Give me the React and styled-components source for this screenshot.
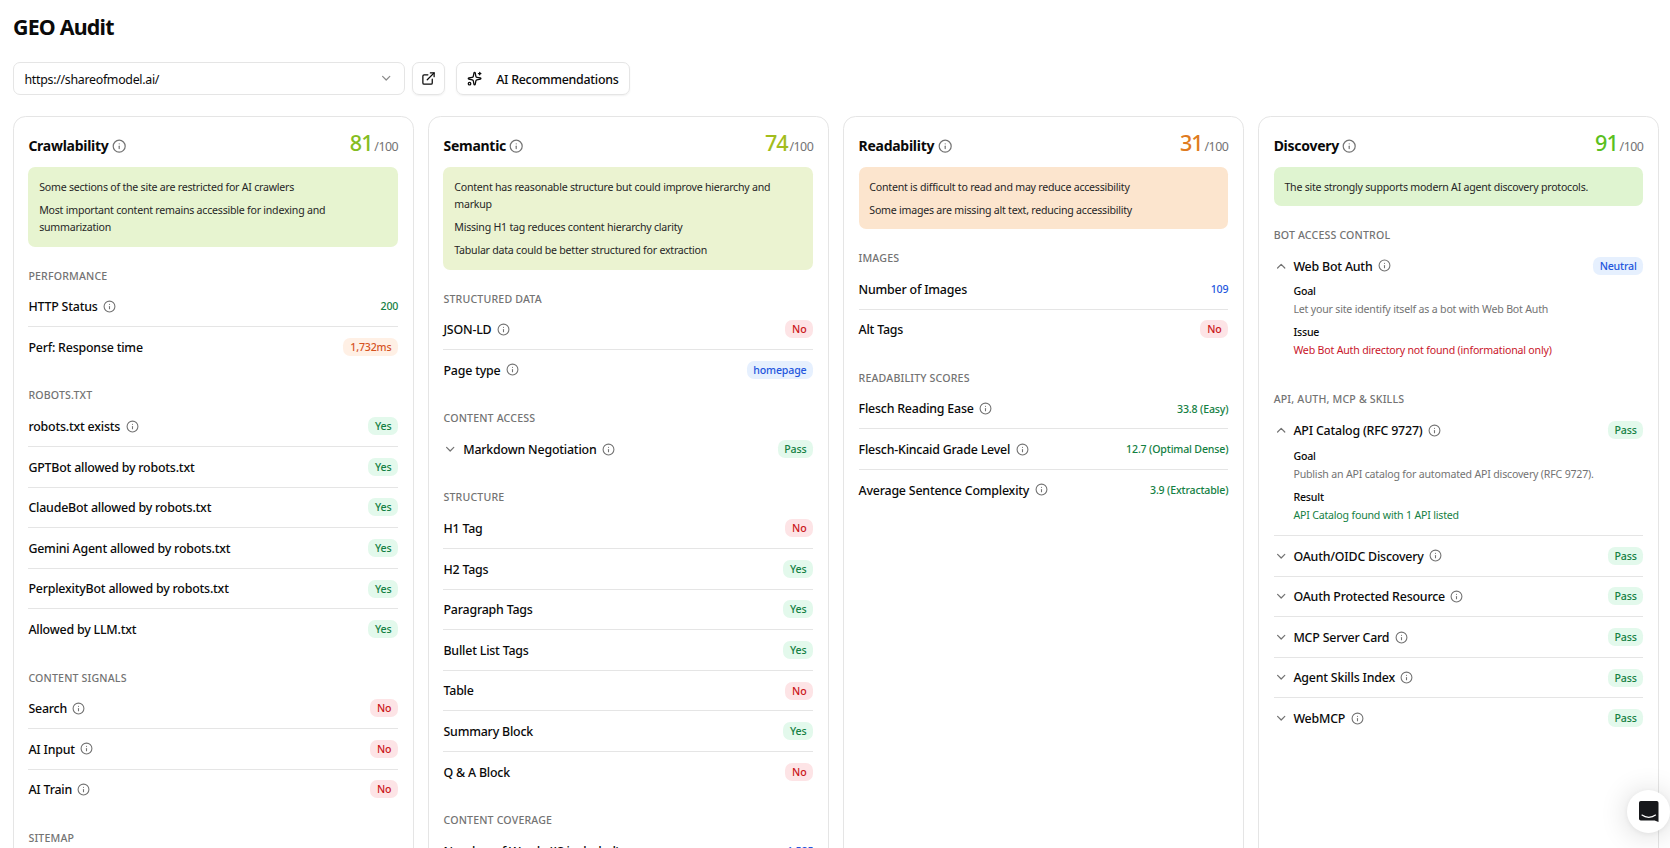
import React from "react"
import styled, { createGlobalStyle } from "styled-components"
import { ChevronDown, ChevronUp, ExternalLink, Info } from "lucide-react"

const muted = "#737373"
const line = "#e5e5e5"

const tones = {
  green: { color: "#148043", background: "#e3f9ec" },
  red: { color: "#cb1a21", background: "#fde4e6" },
  blue: { color: "#2456dd", background: "#e6f0fe" },
  orange: { color: "#d6531f", background: "#fff0e5" },
}

const yes = { text: "Yes", tone: "green", pill: true }
const no = { text: "No", tone: "red", pill: true }
const pass = { text: "Pass", tone: "green", pill: true }

const audits = [
  {
    title: "Crawlability",
    score: 81,
    color: "#85bd22",
    background: "#e7f4d0",
    notes: [
      "Some sections of the site are restricted for AI crawlers",
      "Most important content remains accessible for indexing and summarization",
    ],
    sections: [
      {
        name: "Performance",
        rows: [
          { label: "HTTP Status", info: true, value: { text: "200", tone: "green" } },
          { label: "Perf: Response time", value: { text: "1,732ms", tone: "orange", pill: true } },
        ],
      },
      {
        name: "Robots.txt",
        rows: [
          { label: "robots.txt exists", info: true, value: yes },
          { label: "GPTBot allowed by robots.txt", value: yes },
          { label: "ClaudeBot allowed by robots.txt", value: yes },
          { label: "Gemini Agent allowed by robots.txt", value: yes },
          { label: "PerplexityBot allowed by robots.txt", value: yes },
          { label: "Allowed by LLM.txt", value: yes },
        ],
      },
      {
        name: "Content Signals",
        rows: [
          { label: "Search", info: true, value: no },
          { label: "AI Input", info: true, value: no },
          { label: "AI Train", info: true, value: no },
        ],
      },
      { name: "Sitemap", rows: [] },
    ],
  },
  {
    title: "Semantic",
    score: 74,
    color: "#a3bd1c",
    background: "#ebf3d1",
    notes: [
      "Content has reasonable structure but could improve hierarchy and markup",
      "Missing H1 tag reduces content hierarchy clarity",
      "Tabular data could be better structured for extraction",
    ],
    sections: [
      {
        name: "Structured Data",
        rows: [
          { label: "JSON-LD", info: true, value: no },
          { label: "Page type", info: true, value: { text: "homepage", tone: "blue", pill: true } },
        ],
      },
      {
        name: "Content Access",
        rows: [{ label: "Markdown Negotiation", info: true, toggle: true, value: pass }],
      },
      {
        name: "Structure",
        rows: [
          { label: "H1 Tag", value: no },
          { label: "H2 Tags", value: yes },
          { label: "Paragraph Tags", value: yes },
          { label: "Bullet List Tags", value: yes },
          { label: "Table", value: no },
          { label: "Summary Block", value: yes },
          { label: "Q & A Block", value: no },
        ],
      },
      {
        name: "Content Coverage",
        rows: [
          { label: "Number of Words (JS included)", value: { text: "1,585", tone: "blue" } },
        ],
      },
    ],
  },
  {
    title: "Readability",
    score: 31,
    color: "#df7b20",
    background: "#fce5ce",
    notes: [
      "Content is difficult to read and may reduce accessibility",
      "Some images are missing alt text, reducing accessibility",
    ],
    sections: [
      {
        name: "Images",
        rows: [
          { label: "Number of Images", value: { text: "109", tone: "blue" } },
          { label: "Alt Tags", value: no },
        ],
      },
      {
        name: "Readability Scores",
        rows: [
          { label: "Flesch Reading Ease", info: true, value: { text: "33.8 (Easy)", tone: "green" } },
          { label: "Flesch-Kincaid Grade Level", info: true, value: { text: "12.7 (Optimal Dense)", tone: "green" } },
          { label: "Average Sentence Complexity", info: true, value: { text: "3.9 (Extractable)", tone: "green" } },
        ],
      },
    ],
  },
  {
    title: "Discovery",
    score: 91,
    color: "#5bbf21",
    background: "#dff4d0",
    notes: ["The site strongly supports modern AI agent discovery protocols."],
    sections: [
      {
        name: "Bot Access Control",
        rows: [
          {
            label: "Web Bot Auth",
            info: true,
            toggle: true,
            value: { text: "Neutral", tone: "blue", pill: true },
            details: [
              { term: "Goal", text: "Let your site identify itself as a bot with Web Bot Auth", color: muted },
              { term: "Issue", text: "Web Bot Auth directory not found (informational only)", color: "#c9152a" },
            ],
          },
        ],
      },
      {
        name: "API, Auth, MCP & Skills",
        rows: [
          {
            label: "API Catalog (RFC 9727)",
            info: true,
            toggle: true,
            value: pass,
            details: [
              { term: "Goal", text: "Publish an API catalog for automated API discovery (RFC 9727).", color: muted },
              { term: "Result", text: "API Catalog found with 1 API listed", color: "#148043" },
            ],
          },
          { label: "OAuth/OIDC Discovery", info: true, toggle: true, value: pass },
          { label: "OAuth Protected Resource", info: true, toggle: true, value: pass },
          { label: "MCP Server Card", info: true, toggle: true, value: pass },
          { label: "Agent Skills Index", info: true, toggle: true, value: pass },
          { label: "WebMCP", info: true, toggle: true, value: pass },
        ],
      },
    ],
  },
]

const SparkleIcon = () => (
  <svg width="15.2" height="15.2" viewBox="0 0 24 24" fill="none" stroke="currentColor"
    strokeWidth="2" strokeLinecap="round" strokeLinejoin="round">
    <path d="M11.017 2.814a1 1 0 0 1 1.966 0l1.051 5.558a2 2 0 0 0 1.594 1.594l5.558 1.051a1 1 0 0 1 0 1.966l-5.558 1.051a2 2 0 0 0-1.594 1.594l-1.051 5.558a1 1 0 0 1-1.966 0l-1.051-5.558a2 2 0 0 0-1.594-1.594l-5.558-1.051a1 1 0 0 1 0-1.966l5.558-1.051a2 2 0 0 0 1.594-1.594z" />
    <path d="M20 2v4" />
    <path d="M22 4h-4" />
    <circle cx="4" cy="20" r="2" />
  </svg>
)

const ChatIcon = () => (
  <svg width="19.5" height="21" viewBox="0 0 19.5 21">
    <path d="M1.8 0h15.9a1.8 1.8 0 0 1 1.8 1.8V21l-3.8-1.4H1.8A1.8 1.8 0 0 1 0 17.8v-16A1.8 1.8 0 0 1 1.8 0z" fill="#17181b" />
    <path d="M3 14.1c3.8 2.9 9.7 2.9 13.5 0" fill="none" stroke="#fff" strokeWidth="1.2" strokeLinecap="round" />
  </svg>
)

const AuditRow = ({ row }) => (
  <Row>
    <RowLine>
      {row.toggle && (row.details ? <ChevronUp size={14.4} color={muted} /> : <ChevronDown size={14.4} color={muted} />)}
      <Label>{row.label}</Label>
      {row.info && <Info size={13} color={muted} />}
      <Value $tone={row.value.tone} $pill={row.value.pill}>{row.value.text}</Value>
    </RowLine>

    {row.details && (
      <Details>
        {row.details.map((detail) => (
          <div key={detail.term}>
            <Term>{detail.term}</Term>
            <Description $color={detail.color}>{detail.text}</Description>
          </div>
        ))}
      </Details>
    )}
  </Row>
)

class App extends React.Component {
  render () {
    return (
      <Page>
        <GlobalStyle />
        <Title>GEO Audit</Title>

        <Toolbar>
          <Select>
            <ControlText>https://shareofmodel.ai/</ControlText>
            <ChevronDown size={14.4} color="#8a8a8a" />
          </Select>
          <IconButton><ExternalLink size={15} /></IconButton>
          <RecommendButton>
            <SparkleIcon />
            <ControlText>AI Recommendations</ControlText>
          </RecommendButton>
        </Toolbar>

        <Cards>
          {audits.map((audit) => (
            <Card key={audit.title}>
              <CardHeader>
                <CardTitle>{audit.title}</CardTitle>
                <Info size={14.4} color={muted} />
                <Score $color={audit.color}>{audit.score}</Score>
                <OutOf>/100</OutOf>
              </CardHeader>

              <Notes $background={audit.background}>
                {audit.notes.map((note) => <Note key={note}>{note}</Note>)}
              </Notes>

              {audit.sections.map((section) => (
                <section key={section.name}>
                  <SectionName>{section.name}</SectionName>
                  {section.rows.map((row) => <AuditRow key={row.label} row={row} />)}
                </section>
              ))}
            </Card>
          ))}
        </Cards>

        <Launcher><ChatIcon /></Launcher>
      </Page>
    );
  }
}

const GlobalStyle = createGlobalStyle`
  * {
    box-sizing: border-box;
  }

  body {
    margin: 0;
    background: #fff;
    color: #0a0a0a;
    font-family: "Segoe UI", "Noto Sans", sans-serif;
    overflow: hidden;
  }

  svg {
    flex-shrink: 0;
  }
`

const Page = styled.div`
  height: 848px;
  padding: 13px 11.2px 0 13px;
  overflow: hidden;
`

const Title = styled.h1`
  margin: 0;
  font-size: 21.4px;
  line-height: 28px;
  font-weight: 700;
  letter-spacing: -0.8px;
`

const Toolbar = styled.div`
  display: flex;
  margin-top: 21px;
  font-size: 12.4px;
`

const Control = styled.div`
  display: flex;
  align-items: center;
  height: 33px;
  border: 1px solid ${line};
  border-radius: 7px;
  white-space: nowrap;
`

const ControlText = styled.span`
  padding-top: 2px;
`

const Select = styled(Control)`
  width: 392px;
  padding: 0 11px 0 10.5px;
  justify-content: space-between;
  letter-spacing: -0.3px;
`

const IconButton = styled(Control)`
  width: 33px;
  margin-left: 7px;
  justify-content: center;
  box-shadow: 0 1px 2px rgba(0, 0, 0, 0.06);
`

const RecommendButton = styled(Control)`
  width: 174px;
  margin-left: 11px;
  padding-left: 9.6px;
  gap: 14.4px;
  font-weight: 500;
  letter-spacing: -0.25px;
  box-shadow: 0 1px 2px rgba(0, 0, 0, 0.06);
`

const Cards = styled.div`
  display: grid;
  grid-template-columns: repeat(4, 1fr);
  grid-column-gap: 14.5px;
  margin-top: 21.4px;
`

const Card = styled.div`
  min-height: 760px;
  padding: 14.4px;
  border: 1px solid ${line};
  border-radius: 12.6px;
`

const CardHeader = styled.div`
  display: flex;
  align-items: center;
  height: 28.2px;
  margin-bottom: 7.2px;
`

const CardTitle = styled.h2`
  margin: 0 3.4px 0 0;
  padding-top: 1px;
  font-size: 14px;
  line-height: 20px;
  font-weight: 700;
  letter-spacing: -0.27px;
`

const Score = styled.span`
  margin-left: auto;
  padding-bottom: 6px;
  font-size: 21.6px;
  line-height: 24px;
  font-weight: 500;
  letter-spacing: -1px;
  color: ${(props) => props.$color};
`

const OutOf = styled.span`
  padding: 2.4px 0 0 1.8px;
  font-size: 12.4px;
  line-height: 18px;
  letter-spacing: -0.5px;
  color: ${muted};
`

const Notes = styled.div`
  display: grid;
  row-gap: 5.4px;
  padding: 11.6px 10.8px 10.2px;
  border-radius: 7.2px;
  background: ${(props) => props.$background};
`

const Note = styled.p`
  margin: 0;
  font-size: 10.6px;
  line-height: 17.55px;
  letter-spacing: -0.23px;
  color: #262626;
`

const SectionName = styled.h3`
  margin: 21.6px 0 3.6px;
  font-size: 10.6px;
  line-height: 14.4px;
  font-weight: 500;
  letter-spacing: 0.17px;
  text-transform: uppercase;
  color: ${muted};
`

const Row = styled.div`
  padding: 10.8px 0;

  & + & {
    border-top: 1px solid ${line};
  }
`

const RowLine = styled.div`
  display: flex;
  align-items: center;
  gap: 5.4px;
  height: 18px;
`

const Label = styled.span`
  padding-top: 1.6px;
  font-size: 12.4px;
  line-height: 18px;
  font-weight: 500;
  letter-spacing: -0.2px;
  white-space: nowrap;
`

const Value = styled.span`
  margin-left: auto;
  padding: ${(props) => props.$pill ? "0 6.8px" : "0"};
  border-radius: 7.2px;
  font-size: 10.6px;
  line-height: 18px;
  font-weight: 500;
  letter-spacing: -0.17px;
  white-space: nowrap;
  color: ${(props) => tones[props.$tone].color};
  background: ${(props) => props.$pill ? tones[props.$tone].background : "none"};
`

const Details = styled.div`
  display: grid;
  row-gap: 6.4px;
  padding: 9.6px 0 0 19.8px;
  font-size: 10.6px;
  letter-spacing: -0.19px;
`

const Term = styled.div`
  line-height: 14.4px;
  font-weight: 500;
`

const Description = styled.div`
  margin-top: 2.6px;
  line-height: 17.55px;
  color: ${(props) => props.$color};
`

const Launcher = styled.div`
  position: fixed;
  right: 0;
  bottom: 15px;
  display: flex;
  align-items: center;
  justify-content: center;
  width: 43.2px;
  height: 43.2px;
  padding-left: 1px;
  border-radius: 50%;
  background: #fff;
  box-shadow: 0 1px 6px rgba(0, 0, 0, 0.06), 0 2px 29px rgba(0, 0, 0, 0.16);
`

export default App
